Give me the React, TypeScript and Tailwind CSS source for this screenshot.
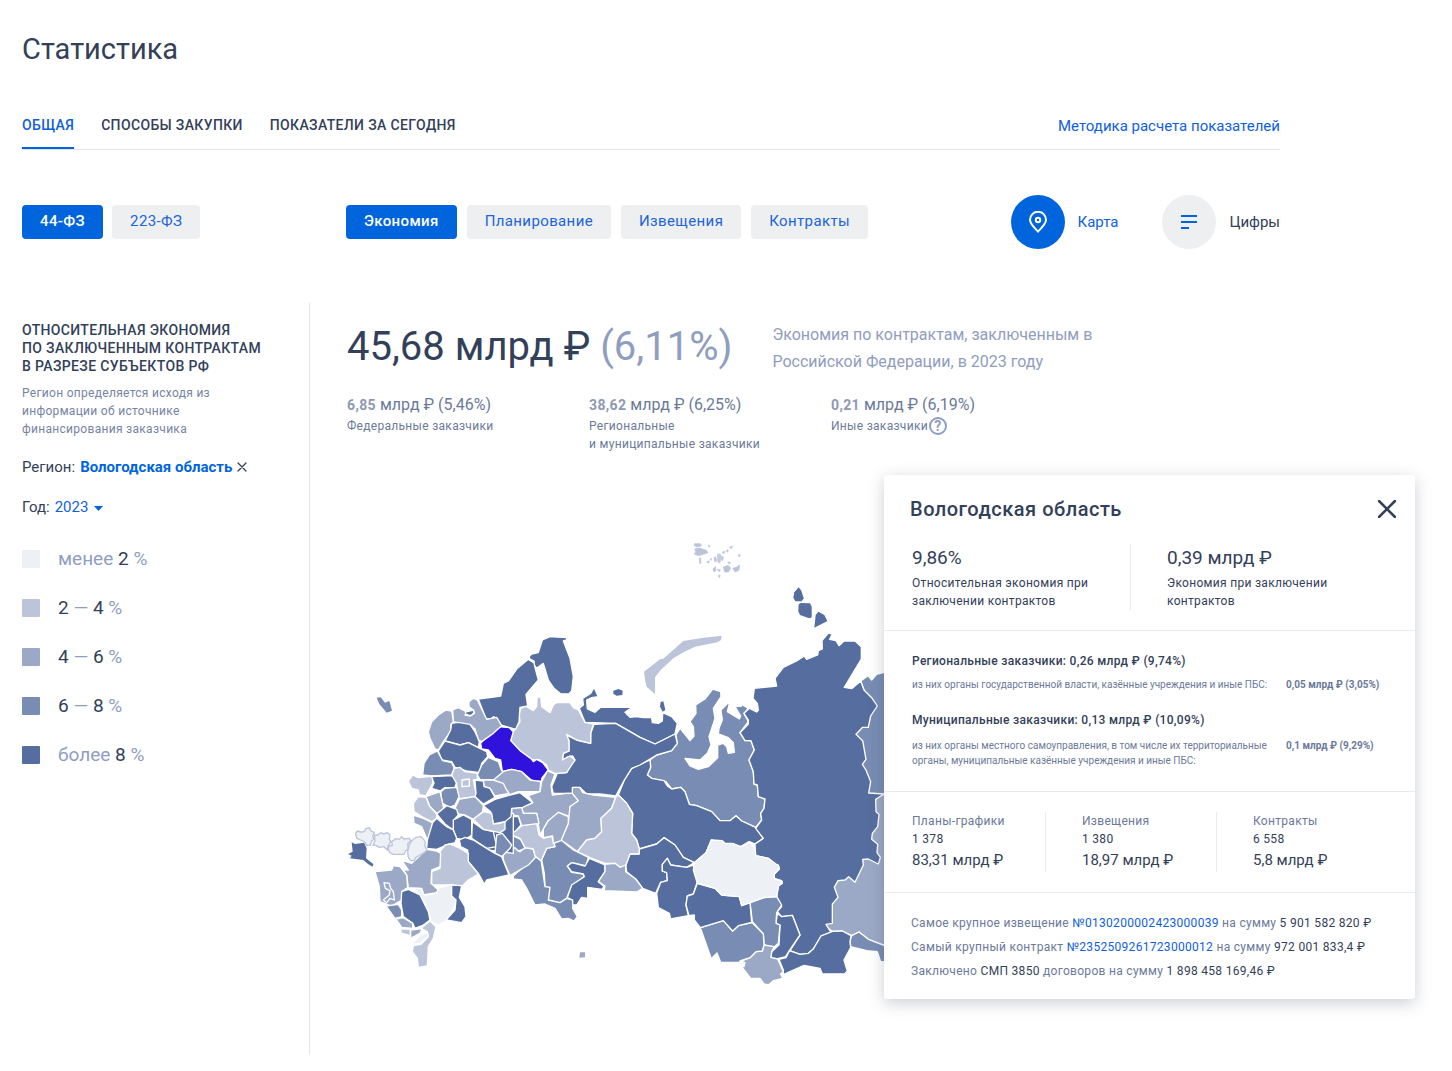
import { useState } from "react";
import type { ReactNode } from "react";

type Tone = "none" | "low" | "mid" | "high" | "top" | "active";
type Region = [Tone, string];

const FILL: Record<Tone, string> = {
  none: "fill-[#edf0f5]",
  low: "fill-[#bcc4da]",
  mid: "fill-[#9ba9c6]",
  high: "fill-[#798db4]",
  top: "fill-[#566e9f]",
  active: "fill-[#2f13dc]",
};

const LEGEND = [
  { color: "bg-[#edf0f5]", before: "менее ", from: "2", sep: "", to: "" },
  { color: "bg-[#bcc4da]", before: "", from: "2", sep: " — ", to: "4" },
  { color: "bg-[#9ba9c6]", before: "", from: "4", sep: " — ", to: "6" },
  { color: "bg-[#798db4]", before: "", from: "6", sep: " — ", to: "8" },
  { color: "bg-[#566e9f]", before: "более ", from: "8", sep: "", to: "" },
];

// Siberia and the Arctic coast
const EAST: Region[] = [
  ["high", "662,453 684,437 695,450 710,433 735,426 780,424 780,795 686,790 640,613 672,480"],
  ["mid", "690,795 780,792 780,1260 732,1246 685,1228 657,1206 635,1217 607,1203 578,1204 552,1188 560,1100 600,1000"],
  ["high", "635,1217 657,1206 685,1228 732,1246 780,1258 780,1295 722,1295 712,1265 680,1262 632,1250 630,1232"],
  ["high", "30,690 50,675 95,662 112,640 108,615 118,598 108,580 150,632 162,618 160,590 150,575 168,550 167,525 195,507 218,477 242,485 243,500 220,535 225,565 207,620 213,645 202,670 180,690 135,685 150,708 175,718 205,710 233,683 233,645 250,640 260,650 265,670 283,667 280,638 265,623 235,612 237,595 247,570 243,540 270,513 262,545 298,567 302,558 285,530 305,528 300,508 308,525 325,535 312,550 325,575 300,608 315,632 333,632 343,660 327,690 340,725 342,762 352,765 355,800 375,807 372,835 362,850 365,870 347,892 305,873 288,857 270,872 240,872 215,845 170,827 148,823 135,785 122,772 95,777 78,755 35,745 22,735 32,712"],
  ["top", "30,690 32,712 22,735 35,745 72,752 82,768 95,777 122,772 135,785 148,823 170,827 215,845 240,872 270,872 288,857 305,873 347,892 370,925 345,942 328,935 303,950 255,940 214,930 198,968 163,998 130,982 105,945 72,923 50,942 -2,957 -10,930 -25,910 -22,850 -40,820 -65,795 -47,750 -25,715 0,703"],
  ["top", "-2,957 50,942 72,923 105,945 130,982 163,998 140,1012 92,1005 82,985 67,1003 67,1023 80,1028 82,1052 62,1057 47,1090 8,1075 -13,1047 -40,1025 -43,1005 -30,972 -3,972"],
  ["top", "50,1090 62,1057 82,1052 80,1028 67,1023 67,1003 82,985 92,1005 140,1012 160,1005 172,1055 160,1092 142,1098 138,1125 145,1157 92,1167 88,1150 55,1133"],
  ["top", "343,475 410,468 405,445 430,412 470,393 493,378 500,388 533,375 535,362 547,357 546,332 565,309 577,312 569,328 588,332 597,347 612,333 645,333 664,350 664,387 613,472 635,476 662,453 672,480 695,503 712,528 692,558 685,592 668,592 648,613 668,632 678,688 667,703 678,720 692,755 686,789 732,792 707,808 708,845 717,853 713,890 697,910 695,928 713,943 711,968 721,982 715,1002 685,987 668,988 670,1005 645,1057 626,1040 615,1050 594,1052 583,1072 594,1102 577,1122 577,1180 558,1183 573,1207 543,1218 520,1257 505,1270 480,1273 450,1262 480,1215 457,1156 425,1160 412,1145 425,1130 410,1100 415,1068 427,1060 425,1052 402,1045 403,1032 418,1017 415,1005 405,1005 385,985 347,977 345,942 370,925 347,895 365,870 362,850 372,835 375,807 355,800 352,765 342,762 340,725 327,690 343,660 333,632 315,632 300,608 325,582 325,570 312,550 328,535 350,546 355,540 352,520 339,505"],
  ["top", "417,1288 438,1283 448,1262 480,1273 505,1270 520,1257 543,1218 578,1204 607,1203 633,1217 630,1235 632,1253 612,1290 622,1323 615,1331 547,1332 540,1315 492,1306 430,1334 430,1320"],
  ["top", "412,1150 425,1160 457,1156 480,1215 448,1262 437,1280 405,1288 393,1282 395,1265 417,1245 420,1185 408,1180"],
  ["high", "330,1118 372,1103 410,1100 425,1125 410,1148 408,1180 420,1185 415,1240 402,1252 372,1245 370,1212 337,1175"],
  ["mid", "402,1250 372,1245 367,1263 348,1265 330,1283 303,1293 315,1298 312,1310 305,1310 332,1345 360,1345 372,1362 385,1365 400,1352 428,1345 422,1332 430,1325 413,1287 393,1282 395,1265"],
  ["high", "181,1193 250,1172 278,1203 295,1187 337,1178 370,1212 372,1245 367,1263 348,1265 330,1283 300,1293 298,1297 242,1297 231,1269 214,1286"],
  ["top", "172,1060 225,1075 245,1095 298,1100 305,1127 330,1118 335,1177 295,1187 278,1203 250,1172 181,1193 163,1170 163,1155 147,1157 138,1125 142,1098 160,1092"],
  ["none", "172,1060 160,1020 163,998 198,968 214,930 247,932 255,940 278,940 303,950 328,935 345,955 347,977 385,985 415,1007 418,1017 403,1032 403,1045 427,1055 415,1070 410,1100 372,1103 330,1118 305,1127 298,1100 245,1095 225,1075"],
];

const NORTH: Region[] = [
  ["top", "328,250 340,240 338,220 362,205 372,187 385,215 365,218 350,225 352,252 375,262 392,247 487,247 465,262 480,277 500,275 520,278 545,278 547,293 565,295 577,288 578,263 605,275 622,295 615,327 555,357 510,337 437,295 345,292"],
  ["top", "372,298 437,295 510,337 555,357 615,327 622,355 605,377 560,390 510,420 485,430 463,465 437,513 390,507 350,507 330,488 310,490 308,505 250,505 245,485 262,445 290,443 293,430 315,405 308,393 295,395 277,405 280,385 297,378 297,345 288,330 320,345 362,355 362,325"],
  ["low", "122,347 130,320 150,290 147,265 152,252 165,242 190,257 200,245 201,222 207,212 213,222 215,245 240,263 250,240 260,233 300,233 310,248 325,255 345,292 370,297 362,325 362,355 320,345 290,328 297,350 297,378 280,385 277,405 300,393 315,405 290,443 255,445 235,435 230,420 210,405 185,403 150,377"],
  ["top", "25,222 92,213 100,175 115,168 140,132 175,103 195,115 195,128 205,165 168,208 173,243 150,247 147,290 137,313 120,308 92,300 72,275 62,282 48,282"],
  ["top", "177,95 185,87 205,83 217,45 240,35 290,38 290,45 280,48 300,100 310,155 305,198 296,207 272,206 252,190 235,165 220,115 200,130 193,120 192,108 180,102"],
  ["active", "32,355 62,322 85,305 118,308 130,320 122,347 150,377 185,403 190,410 200,403 218,413 235,435 215,460 215,468 190,470 155,440 125,433 97,440 92,405 75,400 55,375 35,372"],
  ["mid", "70,465 97,440 125,433 155,440 180,465 212,470 210,500 145,500 110,512 105,490"],
];

const WEST: Region[] = [
  ["top", "430,400 520,400 520,520 440,510"],
  ["mid", "338,90 355,83 385,98 375,105 390,108 403,100 400,90 387,80 387,65 400,55 412,60 440,118 470,112 485,137 460,160 425,185 415,180 405,147 392,135 375,133 340,125"],
  ["top", "376,96 400,90 402,98 392,107 378,103"],
  ["mid", "265,155 275,125 295,105 318,90 335,93 340,125 332,135 332,155 310,185 295,210 285,207 270,175"],
  ["top", "332,150 335,130 355,127 390,133 405,155 418,185 415,203 385,188 360,195 315,183"],
  ["top", "295,213 315,183 360,195 385,188 415,203 440,215 443,230 425,250 420,278 380,273 345,262 335,245 305,240"],
  ["high", "248,285 252,250 268,225 292,213 308,242 335,248 343,265 335,285 275,288"],
  ["low", "205,303 218,285 235,293 280,288 278,310 270,325 258,347 238,345 235,330 215,325"],
  ["top", "275,290 335,287 352,300 345,322 315,323 300,333 275,325 282,310"],
  ["low", "335,285 343,265 360,262 375,275 412,280 412,298 400,300 408,340 405,350 358,357 352,340 350,310"],
  ["low", "366,300 388,297 388,318 366,320"],
  ["high", "425,255 445,232 475,245 485,272 490,275 460,300 420,298 412,285"],
  ["mid", "430,300 460,300 490,310 497,325 507,340 465,348 450,325 432,318"],
  ["top", "405,300 430,303 432,320 450,325 465,352 430,372 405,350 408,340"],
  ["top", "430,377 465,358 510,345 540,338 578,368 548,382 515,385 513,410 495,425 460,432 452,395"],
  ["mid", "345,385 358,357 405,350 430,377 428,395 400,418 375,405 355,402"],
  ["high", "303,335 315,325 350,322 357,350 345,375 328,382 308,370 303,350"],
  ["mid", "258,350 300,335 308,370 312,390 290,400 270,380"],
  ["low", "220,370 235,350 258,352 268,378 290,402 290,415 275,425 250,413 222,395"],
  ["mid", "220,405 250,415 277,428 277,460 262,480 245,440 222,430"],
  ["top", "290,402 320,377 350,388 355,405 342,420 340,450 315,432"],
  ["top", "340,420 370,405 395,418 395,465 375,480 350,475 340,450"],
  ["top", "260,505 262,480 278,428 290,415 320,440 340,450 350,475 345,488 320,495 290,508"],
  ["top", "397,425 430,448 460,455 470,500 440,505 395,475"],
  ["low", "400,418 430,395 455,400 460,432 480,430 495,425 495,448 480,458 430,448"],
];

const SOUTH: Region[] = [
  ["high", "470,45 487,40 515,75 510,85 485,110 465,100"],
  ["top", "358,60 375,52 400,60 440,85 465,100 485,110 507,165 440,180 433,193 415,160 385,125 383,90 362,80"],
  ["low", "300,95 315,75 330,72 360,85 385,100 385,125 415,162 385,180 365,200 330,195 275,195 275,155 300,145"],
  ["mid", "200,165 190,150 205,150 185,120 215,130 260,88 290,93 302,100 300,140 275,150 273,190 295,210 290,218 250,225 240,205 205,203"],
  ["none", "222,205 245,205 252,225 290,220 295,205 335,193 335,230 348,240 342,262 320,300 295,317 275,305 262,270 250,240"],
  ["top", "335,195 365,197 358,232 375,260 378,290 365,308 318,300 345,270 348,240 335,228"],
  ["mid", "105,155 155,150 160,137 180,140 200,165 203,203 185,215 185,240 155,258 120,245 118,200"],
  ["mid", "132,188 148,190 152,205 160,215 163,240 150,235 140,248 130,240 148,225 150,212 136,205"],
  ["top", "185,215 205,208 240,225 265,275 270,300 250,315 225,325 218,310 190,290 183,250"],
  ["high", "138,258 175,253 185,270 185,290 165,295"],
  ["mid", "168,297 190,293 218,310 218,325 185,322"],
  ["low", "180,327 210,327 212,347 185,340"],
  ["low", "243,325 270,303 288,320 280,355 265,380 262,438 235,442 232,415 217,395 220,377 243,373 265,350 262,335"],
  ["mid", "212,330 247,326 240,340 212,355"],
  ["none", "215,372 240,345 262,338 265,348 240,372"],
];

// drawn with a tinted outline instead of the white one
const OUTLINED = [
  "47,40 52,33 62,36 72,35 78,26 88,23 93,33 103,38 98,48 102,58 94,64 92,75 80,76 74,66 62,60 50,55",
  "103,45 112,46 122,38 130,42 142,38 150,45 148,58 153,65 145,76 142,90 132,80 118,82 108,76 99,76 105,62",
  "145,88 147,78 157,76 155,65 168,56 178,58 185,50 192,57 208,55 212,62 203,72 205,88 197,92 192,103 160,103 150,98",
  "203,95 208,75 215,62 228,52 243,50 250,57 256,66 254,76 261,90 252,98 240,105 228,112 222,122 212,122 205,112",
];

const VOLGA: Region[] = [
  ["mid", "115,47 150,35 155,5 172,-27 195,-18 183,15 187,45 230,40 247,40 265,62 240,80 240,110 205,97 195,115 175,122 160,147 150,165 140,100 100,100 95,82 128,68"],
  ["mid", "247,40 247,22 270,22 278,38 310,45 377,52 365,85 333,115 335,155 315,175 290,180 262,215 235,195 213,180 235,130 240,80 265,62"],
  ["low", "377,52 385,45 410,70 428,100 425,160 440,180 448,207 447,222 420,222 407,258 390,262 375,250 345,250 298,232 262,215 290,180 315,175 335,155 333,115 365,85"],
  ["high", "155,240 170,205 195,200 190,190 213,180 250,210 295,232 288,258 245,248 232,258 245,277 283,282 280,295 245,318 230,355 210,370 175,360 177,322 165,320 163,280"],
  ["high", "70,288 135,230 153,240 165,320 180,322 175,360 210,368 230,355 250,360 248,385 262,410 252,423 235,415 215,417 195,385 165,372 135,375 110,325 95,300 70,297"],
  ["top", "298,235 345,255 345,275 325,305 343,320 335,328 293,322 293,355 275,352 260,375 248,375 248,360 232,353 245,315 283,290 280,282 245,275 232,258 245,248 285,258"],
  ["mid", "345,253 375,250 390,262 407,255 407,275 437,297 458,325 440,336 342,332 345,318 325,305 345,275"],
  ["mid", "38,205 75,203 90,215 105,203 130,207 137,232 115,255 60,287 40,240"],
  ["high", "20,165 45,155 95,180 105,205 85,213 75,203 38,205 37,225 5,210 20,195"],
  ["low", "45,155 80,150 95,137 140,130 147,165 160,175 185,168 195,200 170,205 153,243 135,228 130,207 105,203 90,175 65,165"],
  ["mid", "160,147 175,122 205,97 235,110 235,130 213,182 190,190 188,168 160,173"],
  ["mid", "65,85 95,82 100,100 140,100 147,130 95,137 85,108 65,105"],
  ["top", "47,130 60,110 85,110 93,135 75,155 50,152"],
];

// islands and exclaves stand apart, so they carry no border
const ISLANDS: Region[] = [
  ["low", "1145,317 1143,330 1132,337 1065,350 1030,367 1000,385 962,420 945,442 945,492 920,470 915,450 912,425 960,388 970,386 1030,333 1085,324"],
  ["top", "1376,172 1384,182 1391,205 1385,214 1366,214 1360,203 1363,187"],
  ["top", "1376,223 1382,219 1410,220 1415,230 1415,262 1408,265 1380,255 1375,244"],
  ["top", "1435,245 1453,255 1462,273 1423,293 1427,255"],
  ["top", "962,516 970,514 976,540 968,545 960,530"],
  ["top", "820,482 835,477 848,482 847,495 830,497 820,491"],
  ["high", "110,503 122,502 135,518 148,513 156,542 140,548 118,522"],
  ["mid", "720,1267 735,1267 735,1282 718,1283"],
  ["top", "35,937 45,942 72,938 80,955 78,985 88,993 100,1002 98,1010 85,1003 70,990 30,985 35,977 24,972 38,965"],
];

const ISLETS =
  "M163 41h18l4 6-14 4-8-4zM164 57l14-3 20 6 6 8-14 5-14 4-13-4 4-7zM205 45l6 3-4 4zM178 84l4 0 1 16-4 0zM200 96l8-4-2 8zM222 84l5-4 3 14-5 2zM232 72l3 0 3 28-4-4zM239 70l3 4-1 22-3-2zM245 78l5 2-2 12-4-2zM247 66l8-2-4 8zM258 62l6-3 0 8zM268 52l10-4-4 8zM294 76l6-4-1 9zM250 111l14-5 8 8-6 12-12 0zM278 115l12-4 9-6-2 16-12 5zM219 116l8-6 0 13-6 2zM231 118l10 2-3 5zM234 138l6-3-1 8zM263 96l8 1-3 6zM210 88l4-3 0 6z";

function Regions({ items, offset }: { items: Region[]; offset: string }) {
  return (
    <g transform={offset} className="stroke-white" strokeWidth={4} strokeLinejoin="round">
      {items.map(([tone, points], i) => (
        <polygon key={i} points={points} className={FILL[tone]} />
      ))}
    </g>
  );
}

function RussiaMap() {
  return (
    <svg viewBox="0 0 1680 1410" className="block w-[560px]" role="img" aria-label="Карта субъектов РФ">
      <Regions items={EAST} offset="translate(900 0)" />
      <Regions items={NORTH} offset="translate(390 285)" />
      <Regions items={VOLGA} offset="translate(450 750)" />
      <Regions items={WEST} offset="translate(0 450)" />
      <Regions items={SOUTH} offset="translate(0 870)" />
      <g transform="translate(0 870)" className="fill-[#edf0f5] stroke-[#bcc4da]" strokeWidth={4} strokeLinejoin="round">
        {OUTLINED.map((points) => (
          <polygon key={points} points={points} />
        ))}
      </g>
      {ISLANDS.map(([tone, points]) => (
        <polygon key={points} points={points} className={FILL[tone]} />
      ))}
      <path
        transform="translate(900 0)"
        d={ISLETS}
        className="fill-[#bcc4da] stroke-[#bcc4da]"
        strokeWidth={2}
        strokeLinejoin="round"
      />
    </svg>
  );
}

function Cross({ size, weight }: { size: number; weight: number }) {
  return (
    <svg width={size} height={size} viewBox={`0 0 ${size} ${size}`} fill="none" stroke="currentColor" strokeWidth={weight}>
      <path d={`M1 1L${size - 1} ${size - 1}M${size - 1} 1L1 ${size - 1}`} strokeLinecap="round" />
    </svg>
  );
}

function Pill({ active, onClick, children }: { active: boolean; onClick: () => void; children: string }) {
  return (
    <button
      type="button"
      onClick={onClick}
      className={`h-[34px] rounded px-[18px] pb-[2px] text-[15px] tracking-wide ${
        active ? "bg-[#0065dd] font-medium text-white" : "bg-[#eeeff1] text-[#2065d8]"
      }`}
    >
      {children}
    </button>
  );
}

function Stat({ value, rest, children }: { value: string; rest: string; children: ReactNode }) {
  return (
    <div className="w-[242px]">
      <p className="text-base leading-6 text-[#6b7a99]">
        <b className="text-sm font-bold tracking-wide text-[#8e99b3]">{value}</b> {rest}
      </p>
      <div className="text-xs leading-[18px] tracking-wide text-[#6b7a99]">{children}</div>
    </div>
  );
}

function RegionCard({ onClose }: { onClose: () => void }) {
  return (
    <section className="absolute top-[172px] left-[862px] w-[531px] rounded-[3px] bg-white pb-4 text-xs leading-[18px] tracking-wide text-[#334059] shadow-[0_4px_16px_rgba(51,64,89,0.25)]">
      <div className="flex items-center justify-between pt-[18px] pr-[19px] pl-[26px]">
        <h2 className="text-xl leading-8 font-medium tracking-wide">Вологодская область</h2>
        <button type="button" aria-label="Закрыть" onClick={onClose}>
          <Cross size={18} weight={2.5} />
        </button>
      </div>
      <div className="mt-[19px] flex pb-5 pl-7">
        <div className="w-[219px] border-r border-[#e9ebf0] pr-8">
          <p className="text-[19px] leading-7 tracking-normal">9,86%</p>
          <p className="mt-[2px]">Относительная экономия при заключении контрактов</p>
        </div>
        <div className="w-[220px] pl-9">
          <p className="text-[19px] leading-7 tracking-normal">0,39 млрд ₽</p>
          <p className="mt-[2px]">Экономия при заключении контрактов</p>
        </div>
      </div>
      <div className="border-t border-[#e9ebf0] px-7 pt-[21px] pb-[23px]">
        <h3 className="font-medium">Региональные заказчики: 0,26 млрд ₽ (9,74%)</h3>
        <div className="mt-[7px] flex text-[10px] leading-[15px] text-[#6b7a99]">
          <p className="w-[374px] tracking-normal">из них органы государственной власти, казённые учреждения и иные ПБС:</p>
          <b className="tracking-normal">0,05 млрд ₽ (3,05%)</b>
        </div>
        <h3 className="mt-[19px] font-medium">Муниципальные заказчики: 0,13 млрд ₽ (10,09%)</h3>
        <div className="mt-[9px] flex text-[10px] leading-[15px] text-[#6b7a99]">
          <p className="w-[374px] tracking-normal">
            из них органы местного самоуправления, в том числе их территориальные
            <br />
            органы, муниципальные казённые учреждения и иные ПБС:
          </p>
          <b className="tracking-normal">0,1 млрд ₽ (9,29%)</b>
        </div>
      </div>
      <div className="flex border-t border-[#e9ebf0] py-5 pl-7">
        {[
          ["Планы-графики", "1 378", "83,31 млрд ₽"],
          ["Извещения", "1 380", "18,97 млрд ₽"],
          ["Контракты", "6 558", "5,8 млрд ₽"],
        ].map(([label, count, sum], i) => (
          <div
            key={label}
            className={`h-[60px] ${i === 0 ? "w-[134px]" : "w-[171px] pl-9"} ${i < 2 ? "border-r border-[#e9ebf0]" : ""}`}
          >
            <p className="text-[#6b7a99]">{label}</p>
            <p>{count}</p>
            <p className="text-[15px] leading-6 tracking-normal">{sum}</p>
          </div>
        ))}
      </div>
      <div className="border-t border-[#e9ebf0] pt-[18px] pl-[27px] leading-6 text-[#6b7a99]">
        <p>
          Самое крупное извещение <a href="#notice" className="text-[#1060dc]">№0130200002423000039</a> на сумму{" "}
          <span className="text-[#334059]">5 901 582 820 ₽</span>
        </p>
        <p>
          Самый крупный контракт <a href="#contract" className="text-[#1060dc]">№2352509261723000012</a> на сумму{" "}
          <span className="text-[#334059]">972 001 833,4 ₽</span>
        </p>
        <p>
          Заключено <span className="text-[#334059]">СМП 3850</span> договоров на сумму{" "}
          <span className="text-[#334059]">1 898 458 169,46 ₽</span>
        </p>
      </div>
    </section>
  );
}

export default function App() {
  const [tab, setTab] = useState("Общая");
  const [law, setLaw] = useState("44-ФЗ");
  const [metric, setMetric] = useState("Экономия");
  const [region, setRegion] = useState(true);
  const [card, setCard] = useState(true);

  return (
    <div className="bg-white font-[Roboto,sans-serif] text-[#334059]">
      <div className="max-w-[1302px] px-[22px] pt-[29px] pb-4">
        <h1 className="text-[29px] leading-10">Статистика</h1>

        <div className="mt-9 flex h-[45px] justify-between border-b border-[#e1e4ec]">
          <nav className="flex gap-[27px]">
            {["Общая", "Способы закупки", "Показатели за сегодня"].map((t) => (
              <button
                key={t}
                type="button"
                onClick={() => setTab(t)}
                className={`border-b-2 pb-[3px] text-sm font-medium tracking-wide uppercase ${
                  tab === t ? "border-[#0065dd] text-[#1060dc]" : "border-transparent"
                }`}
              >
                {t}
              </button>
            ))}
          </nav>
          <a href="#method" className="pt-[9px] text-[15px] leading-6 text-[#1060dc]">
            Методика расчета показателей
          </a>
        </div>

        <div className="mt-[45px] flex h-[54px] items-center">
          <div className="flex w-[324px] gap-[9px]">
            {["44-ФЗ", "223-ФЗ"].map((l) => (
              <Pill key={l} active={law === l} onClick={() => setLaw(l)}>{l}</Pill>
            ))}
          </div>
          <div className="flex gap-[10px]">
            {["Экономия", "Планирование", "Извещения", "Контракты"].map((m) => (
              <Pill key={m} active={metric === m} onClick={() => setMetric(m)}>{m}</Pill>
            ))}
          </div>
          <div className="ml-auto flex gap-11 text-[15px]">
            <button type="button" className="flex items-center gap-[13px] text-[#1060dc]">
              <span className="flex size-[54px] items-center justify-center rounded-full bg-[#0065dd]">
                <svg width="18" height="22" viewBox="0 0 18 22" fill="none" stroke="white" strokeWidth="2">
                  <path d="M9 20.5C6 17.5 1 13 1 8.8a8 8 0 0 1 16 0C17 13 12 17.5 9 20.5Z" />
                  <circle cx="9" cy="9" r="2.2" />
                </svg>
              </span>
              Карта
            </button>
            <button type="button" className="flex items-center gap-[13px]">
              <span className="flex size-[54px] items-center justify-center rounded-full bg-[#eeeff1]">
                <svg width="16" height="14" viewBox="0 0 16 14" fill="none" stroke="#0065dd" strokeWidth="2">
                  <path d="M0 1h16M0 7h16M0 13h8" />
                </svg>
              </span>
              Цифры
            </button>
          </div>
        </div>

        <div className="relative mt-[54px] flex">
          <aside className="min-h-[752px] w-[288px] border-r border-[#e1e4ec] pt-[18px]">
            <h2 className="text-sm leading-[18px] font-medium tracking-wide uppercase">
              Относительная экономия
              <br />
              по заключенным контрактам
              <br />
              в разрезе субъектов РФ
            </h2>
            <p className="mt-[9px] w-[200px] text-xs leading-[18px] tracking-wide text-[#7684a1]">
              Регион определяется исходя из информации об источнике финансирования заказчика
            </p>
            <div className="mt-[17px] flex h-6 items-center text-[15px]">
              Регион:
              {region && (
                <>
                  <b className="ml-[5px] text-[#0065dd]">Вологодская область</b>
                  <button type="button" aria-label="Сбросить регион" className="ml-[5px]" onClick={() => setRegion(false)}>
                    <Cross size={10} weight={1.3} />
                  </button>
                </>
              )}
            </div>
            <label className="mt-4 flex h-6 items-center text-[15px]">
              Год:
              <select defaultValue="2023" className="ml-[5px] appearance-none bg-transparent text-[#1060dc]">
                <option>2023</option>
                <option>2022</option>
              </select>
              <svg width="9" height="5" viewBox="0 0 9 5" className="mt-[3px] ml-[5px] fill-[#0065dd]">
                <path d="M0 0h9L4.500 5z" />
              </svg>
            </label>
            <ul className="mt-[26px] space-y-[21px] text-[19px] leading-7 text-[#8f9dbe]">
              {LEGEND.map((l) => (
                <li key={l.color} className="flex items-center gap-[18px]">
                  <span className={`size-[18px] rounded-[1px] ${l.color}`} />
                  <span>
                    {l.before}
                    <span className="text-[#334059]">{l.from}</span>
                    {l.sep}
                    <span className="text-[#334059]">{l.to}</span> %
                  </span>
                </li>
              ))}
            </ul>
          </aside>

          <main className="min-w-0 flex-1 pt-[18px]">
            <div className="flex gap-10 pl-[37px]">
              <p className="text-[40px] leading-[52px] whitespace-nowrap">
                45,68 млрд ₽ <span className="text-[#8f9dbe]">(6,11%)</span>
              </p>
              <p className="w-[340px] text-base leading-[27px] text-[#8f9dbe]">
                Экономия по контрактам, заключенным в Российской Федерации, в 2023 году
              </p>
            </div>
            <div className="mt-[18px] flex pl-[37px]">
              <Stat value="6,85" rest="млрд ₽ (5,46%)">Федеральные заказчики</Stat>
              <Stat value="38,62" rest="млрд ₽ (6,25%)">
                Региональные
                <br />и муниципальные заказчики
              </Stat>
              <Stat value="0,21" rest="млрд ₽ (6,19%)">
                <span className="flex items-center gap-px">
                  Иные заказчики
                  <span className="flex size-[18px] items-center justify-center rounded-full border-2 border-[#8f9dbe] text-sm leading-[14px] font-bold text-[#8f9dbe]">
                    ?
                  </span>
                </span>
              </Stat>
            </div>
            <div className="mt-[77px] ml-[30px]">
              <RussiaMap />
            </div>
          </main>

          {card && <RegionCard onClose={() => setCard(false)} />}
        </div>
      </div>
    </div>
  );
}
